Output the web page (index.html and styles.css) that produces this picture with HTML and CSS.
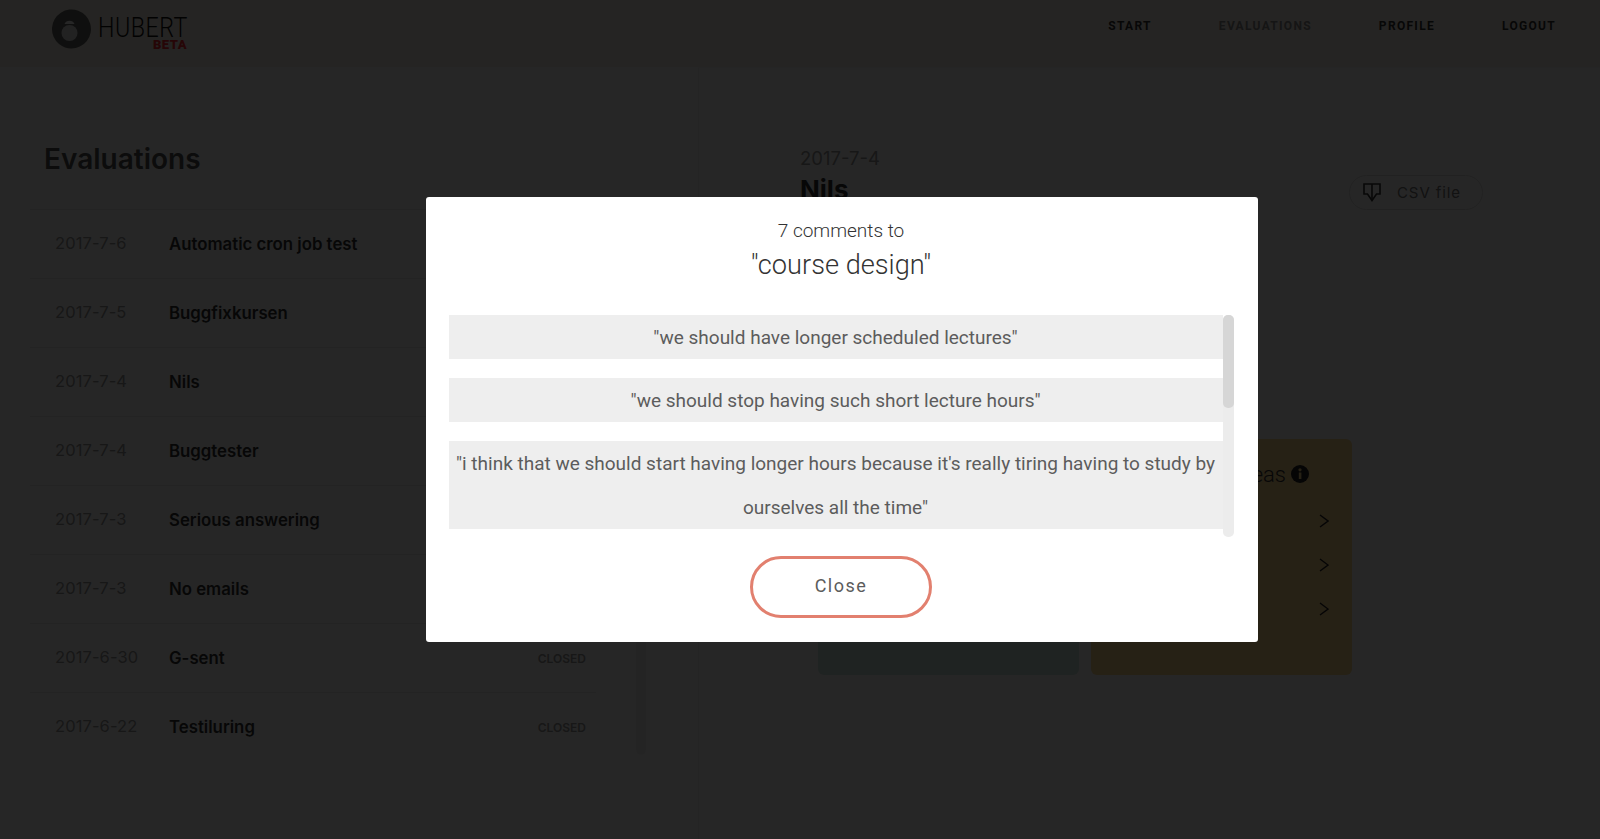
FILE: index.html
```html
<!DOCTYPE html>
<html lang="en">
<head>
    <title>Hubert - Evaluations</title>
    <link rel="stylesheet" href="styles.css">
</head>
<body>
    <header class="top-bar">
        <div class="logo">
            <svg class="logo-mark" width="40" height="40" viewBox="0 0 40 40">
                <path d="M8 35A19.5 19.5 0 1 1 20 39.5C16 39.5 12 38 8 35Z" fill="#666"/>
                <circle cx="18.5" cy="24" r="8" fill="#e4e4e4"/>
                <path d="M13.5 15A5.5 5.5 0 0 1 23.5 15Z" fill="#fff"/>
            </svg>
            <div class="logo-text">
                <span class="logo-name">HUBERT</span>
                <span class="logo-beta">BETA</span>
            </div>
        </div>
        <nav class="nav">
            <a>START</a>
            <a class="nav-current">EVALUATIONS</a>
            <a>PROFILE</a>
            <a>LOGOUT</a>
        </nav>
    </header>

    <main class="page">
        <section class="list-panel">
            <h1 class="list-title">Evaluations</h1>
            <div class="list-wrap">
                <ul class="eval-list">
                    <li class="eval-row"><span class="eval-date">2017-7-6</span><span class="eval-name">Automatic cron job test</span></li>
                    <li class="eval-row"><span class="eval-date">2017-7-5</span><span class="eval-name">Buggfixkursen</span></li>
                    <li class="eval-row"><span class="eval-date">2017-7-4</span><span class="eval-name">Nils</span></li>
                    <li class="eval-row"><span class="eval-date">2017-7-4</span><span class="eval-name">Buggtester</span></li>
                    <li class="eval-row"><span class="eval-date">2017-7-3</span><span class="eval-name">Serious answering</span></li>
                    <li class="eval-row"><span class="eval-date">2017-7-3</span><span class="eval-name">No emails</span></li>
                    <li class="eval-row"><span class="eval-date">2017-6-30</span><span class="eval-name">G-sent</span><span class="eval-status">CLOSED</span></li>
                    <li class="eval-row"><span class="eval-date">2017-6-22</span><span class="eval-name">Testiluring</span><span class="eval-status">CLOSED</span></li>
                </ul>
                <div class="list-scroll"></div>
            </div>
        </section>

        <section class="detail-panel">
            <div class="detail-head">
                <div>
                    <div class="detail-date">2017-7-4</div>
                    <h2 class="detail-name">Nils</h2>
                </div>
                <a class="csv-button">
                    <svg width="18" height="19" viewBox="0 0 18 19" fill="none" stroke="#333" stroke-width="1.6">
                        <path d="M4.5 11H1V1H17V11H13.5L9 17.5Z"/>
                        <path d="M9 1V17"/>
                    </svg>
                    <span>CSV file</span>
                </a>
            </div>
            <div class="cards">
                <div class="card card-green"></div>
                <div class="card card-amber">
                    <div class="card-title">
                        <span>Ideas</span>
                        <svg width="18" height="18" viewBox="0 0 18 18">
                            <circle cx="9" cy="9" r="9" fill="#222"/>
                            <rect x="7.8" y="7.5" width="2.6" height="6.5" fill="#ffd98e"/>
                            <circle cx="9" cy="4.8" r="1.6" fill="#ffd98e"/>
                        </svg>
                    </div>
                    <div class="card-row"><svg width="10" height="14" viewBox="0 0 10 14" fill="none" stroke="#222" stroke-width="1.4"><path d="M1 1L9 7L1 13"/></svg></div>
                    <div class="card-row"><svg width="10" height="14" viewBox="0 0 10 14" fill="none" stroke="#222" stroke-width="1.4"><path d="M1 1L9 7L1 13"/></svg></div>
                    <div class="card-row"><svg width="10" height="14" viewBox="0 0 10 14" fill="none" stroke="#222" stroke-width="1.4"><path d="M1 1L9 7L1 13"/></svg></div>
                </div>
            </div>
        </section>
    </main>

    <div class="overlay">
        <div class="modal">
            <p class="modal-count">7 comments to</p>
            <h3 class="modal-topic">"course design"</h3>
            <div class="comments">
                <div class="comment-list">
                    <p class="comment">"we should have longer scheduled lectures"</p>
                    <p class="comment">"we should stop having such short lecture hours"</p>
                    <p class="comment">"i think that we should start having longer hours because it's really tiring having to study by ourselves all the time"</p>
                </div>
                <div class="scroll-track"><div class="scroll-thumb"></div></div>
            </div>
            <button class="close-button">Close</button>
        </div>
    </div>
</body>
</html>
```
FILE: styles.css
```css
body {
    font-family: Inter, "Liberation Sans", sans-serif;
    margin: 0;
    height: 839px;
    overflow: hidden;
    background-color: #fff;
    color: #444;
}

.top-bar {
    height: 67px;
    display: flex;
    justify-content: space-between;
    background-color: #f8f2e8;
}

.logo {
    display: flex;
    padding: 9px 0 0 51px;
}

.logo-text {
    display: flex;
    flex-direction: column;
    width: 92px;
    margin-left: 7px;
}

.logo-name {
    font-family: Roboto, sans-serif;
    font-size: 28px;
    font-weight: 300;
    line-height: 26px;
    margin-top: 6px;
    letter-spacing: 0.6px;
    color: #111;
    transform: scaleX(0.83);
    transform-origin: left;
}

.logo-beta {
    font-family: Roboto, sans-serif;
    font-size: 13px;
    line-height: 12px;
    font-weight: 900;
    align-self: flex-end;
    margin-top: -2px;
    margin-right: 3px;
    letter-spacing: 0.5px;
    color: #ff2a30;
}

.nav {
    display: flex;
    gap: 67px;
    padding: 19px 44px 0 0;
    font-family: Roboto, sans-serif;
    font-size: 12px;
    line-height: 14px;
    font-weight: 700;
    letter-spacing: 1.3px;
    color: #333;
}

.nav-current {
    color: #8a8a8a;
}

.page {
    display: grid;
    grid-template-columns: 698px 1fr;
    height: 772px;
}

.list-panel {
    padding: 0 0 0 30px;
}

.list-title {
    margin: 73px 0 0 14px;
    height: 69px;
    font-size: 28px;
    line-height: 38px;
    font-weight: 600;
    color: #555;
}

.list-wrap {
    display: flex;
}

.eval-list {
    list-style: none;
    margin: 0;
    padding: 0;
    width: 566px;
}

.eval-row {
    height: 68px;
    display: flex;
    align-items: center;
    border-top: 1px solid #e8e8e8;
    padding: 0 10px 0 25px;
}

.eval-date {
    width: 114px;
    font-size: 16.5px;
    letter-spacing: 0.1px;
    margin-top: -2px;
    color: #999;
}

.eval-name {
    flex: 1;
    font-size: 16.8px;
    font-weight: 600;
    color: #333;
}

.eval-status {
    font-size: 12px;
    font-weight: 600;
    color: #999;
}

.list-scroll {
    width: 10px;
    height: 546px;
    margin-left: 40px;
    border-radius: 5px;
    background-color: #f2f2f2;
}

.detail-panel {
    border-left: 1px solid #f2f2f2;
    border-top: 1px solid #f6f6f6;
    padding: 70px 117px 0 101px;
}

.detail-head {
    display: flex;
    justify-content: space-between;
    align-items: flex-start;
    height: 301px;
}

.detail-date {
    font-size: 18.5px;
    line-height: 40px;
    color: #999;
}

.detail-name {
    margin: -5px 0 0;
    font-size: 26px;
    line-height: 34px;
    font-weight: 700;
    color: #333;
}

.csv-button {
    display: flex;
    align-items: center;
    gap: 16px;
    width: 134px;
    height: 35px;
    box-sizing: border-box;
    margin-top: 37px;
    padding-left: 13px;
    border: 1px solid #dedede;
    border-radius: 18px;
    font-size: 15px;
    letter-spacing: 0.9px;
    color: #777;
}

.cards {
    display: flex;
    gap: 12px;
    margin-left: 18px;
}

.card {
    width: 261px;
    height: 236px;
    border-radius: 6px;
}

.card-green {
    background-color: #d2e6e2;
}

.card-amber {
    background-color: #ffd98e;
    padding: 0 23px 0 0;
    box-sizing: border-box;
}

.card-title {
    height: 60px;
    display: flex;
    justify-content: flex-end;
    align-items: center;
    gap: 5px;
    padding: 10px 20px 0 0;
    box-sizing: border-box;
    font-family: Roboto, sans-serif;
    font-size: 22px;
    font-weight: 300;
    color: #333;
}

.card-row {
    height: 44px;
    display: flex;
    align-items: center;
    justify-content: flex-end;
}

.overlay {
    position: fixed;
    inset: 0;
    display: flex;
    align-items: center;
    justify-content: center;
    padding-left: 83px;
    background-color: rgba(0, 0, 0, 0.85);
}

.modal {
    width: 832px;
    height: 445px;
    box-sizing: border-box;
    padding: 20px 24px 0 23px;
    background-color: #fff;
    border-radius: 3px;
    text-align: center;
    font-family: Roboto, sans-serif;
}

.modal-count {
    margin: 0;
    font-size: 19px;
    line-height: 28px;
    font-weight: 300;
    color: #333;
}

.modal-topic {
    margin: 1px 0 0;
    font-size: 27.2px;
    line-height: 38px;
    font-weight: 300;
    color: #333;
}

.comments {
    display: flex;
    height: 222px;
    margin-top: 31px;
}

.comment-list {
    flex: 1;
}

.comment {
    margin: 0 0 18px;
    padding-top: 1px;
    font-size: 19px;
    line-height: 44px;
    background: linear-gradient(#eee, #eee) no-repeat top / 100% calc(100% - 1px);
    color: #5c5c5c;
}

.scroll-track {
    width: 11px;
    background-color: #ececec;
    border-radius: 5px;
}

.scroll-thumb {
    height: 93px;
    background-color: #d6d6d6;
    border-radius: 5px;
}

.close-button {
    display: block;
    width: 182px;
    height: 62px;
    margin: 19px auto 0;
    padding-bottom: 4px;
    background-color: #fff;
    border: 3px solid #e2806f;
    border-radius: 31px;
    font-family: Roboto, sans-serif;
    font-size: 18px;
    font-weight: 400;
    letter-spacing: 1.5px;
    color: #5c5c5c;
}
```
